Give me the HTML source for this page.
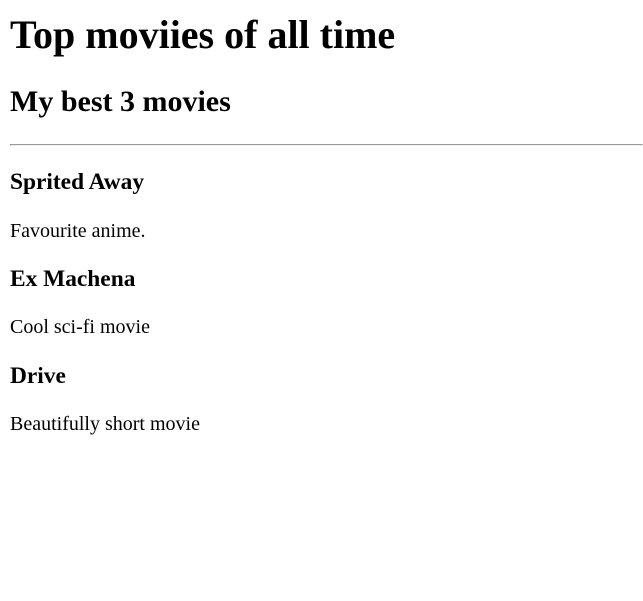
<!DOCTYPE html>
<html style="zoom:1.25"><head><style>body{font-family:"Liberation Serif",serif;margin:8px;position:relative;top:-12.5px;}hr{margin-right:-8px;}</style></head><body>
<h1>Top moviies of all time</h1>
<h2>My best 3 movies</h2>
<hr>
<h3>Sprited Away</h3>
<p>Favourite anime.</p>
<h3>Ex Machena</h3>
<p>Cool sci-fi movie</p>
<h3>Drive</h3>
<p>Beautifully short movie</p>
</body></html>
